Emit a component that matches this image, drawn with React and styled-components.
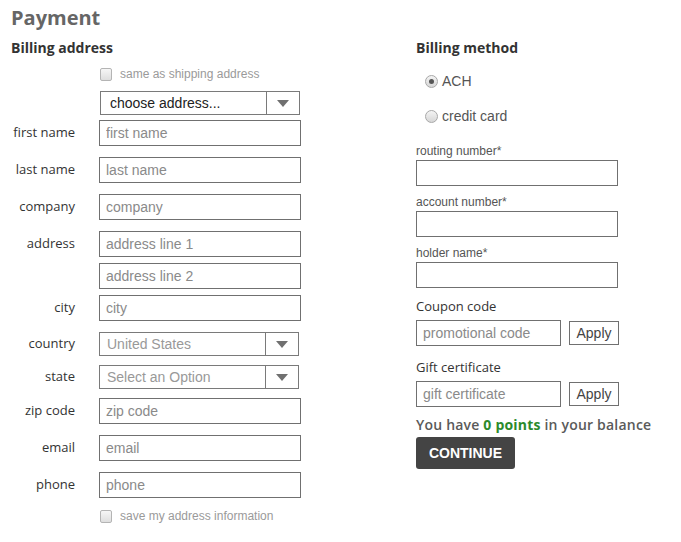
import styled, { createGlobalStyle } from "styled-components";

const GlobalStyle = createGlobalStyle`
  body {
    margin: 0;
    background: #fff;
    font-family: "Liberation Sans", Arial, sans-serif;
  }
  * { box-sizing: border-box; }
`;

function Checkbox({ label, top }) {
  return (
    <CheckRow $top={top}>
      <span />
      <CheckLabel>
        <CheckBox />
        {label}
      </CheckLabel>
    </CheckRow>
  );
}

function Field({ label, placeholder, top }) {
  return (
    <FieldRow $top={top}>
      <FieldLabel>{label}</FieldLabel>
      <TextInput placeholder={placeholder} />
    </FieldRow>
  );
}

function SelectField({ label, value, muted, top }) {
  return (
    <FieldRow $top={top}>
      <FieldLabel $select>{label}</FieldLabel>
      <Select>
        <SelectValue $muted={muted}>{value}</SelectValue>
        <SelectArrow />
      </Select>
    </FieldRow>
  );
}

function MethodField({ label, top }) {
  return (
    <MethodBlock $top={top}>
      <SmallLabel>{label}*</SmallLabel>
      <TextInput />
    </MethodBlock>
  );
}

function CodeField({ label, placeholder, top }) {
  return (
    <CodeBlock $top={top}>
      <CodeLabel>{label}</CodeLabel>
      <CodeRow>
        <CodeInput placeholder={placeholder} />
        <ApplyBtn>Apply</ApplyBtn>
      </CodeRow>
    </CodeBlock>
  );
}

function App() {
  return (
    <Page>
      <GlobalStyle />
      <Title>Payment</Title>
      <Columns>
        <LeftCol>
          <SectionTitle>Billing address</SectionTitle>
          <Checkbox label="same as shipping address" top={10} />
          <FieldRow $top={10}>
            <span />
            <Select $nudge>
              <SelectValue $dark>choose address...</SelectValue>
              <SelectArrow />
            </Select>
          </FieldRow>
          <Field label="first name" placeholder="first name" top={5} />
          <Field label="last name" placeholder="last name" top={11} />
          <Field label="company" placeholder="company" top={11} />
          <Field label="address" placeholder="address line 1" top={11} />
          <Field label="" placeholder="address line 2" top={6} />
          <Field label="city" placeholder="city" top={6} />
          <SelectField label="country" value="United States" muted top={11} />
          <SelectField label="state" value="Select an Option" muted top={9} />
          <Field label="zip code" placeholder="zip code" top={9} />
          <Field label="email" placeholder="email" top={11} />
          <Field label="phone" placeholder="phone" top={11} />
          <Checkbox label="save my address information" top={11} />
        </LeftCol>
        <RightCol>
          <SectionTitle>Billing method</SectionTitle>
          <RadioRow $top={16}>
            <Radio $checked />
            ACH
          </RadioRow>
          <RadioRow $top={19}>
            <Radio />
            credit card
          </RadioRow>
          <MethodField label="routing number" top={20} />
          <MethodField label="account number" top={9} />
          <MethodField label="holder name" top={9} />
          <CodeField label="Coupon code" placeholder="promotional code" top={10} />
          <CodeField label="Gift certificate" placeholder="gift certificate" top={13} />
          <Balance>
            You have <Points>0 points</Points> in your balance
          </Balance>
          <ContinueBtn>CONTINUE</ContinueBtn>
        </RightCol>
      </Columns>
    </Page>
  );
}

const Page = styled.div`
  padding: 6px 0 0 11px;
`;

const Title = styled.h1`
  margin: 0;
  font: 700 20px/24px "Open Sans", sans-serif;
  color: #666;
`;

const Columns = styled.div`
  display: flex;
  margin-top: 9px;
`;

const LeftCol = styled.div`
  width: 405px;
  display: flex;
  flex-direction: column;
`;

const RightCol = styled.div`
  width: 260px;
  display: flex;
  flex-direction: column;
`;

const SectionTitle = styled.h2`
  margin: 0;
  font: 700 14px/18px "Open Sans", sans-serif;
  color: #333;
`;

const FieldRow = styled.div`
  display: grid;
  grid-template-columns: 64px 202px;
  column-gap: 24px;
  margin-top: ${(p) => p.$top}px;
`;

const CheckRow = styled(FieldRow)`
  height: 14px;
`;

const CheckLabel = styled.label`
  display: flex;
  align-items: center;
  gap: 8px;
  padding-left: 1px;
  font-size: 12px;
  color: #9a9a9a;
`;

const CheckBox = styled.span`
  width: 12px;
  height: 13px;
  border: 1px solid #b4b4b4;
  border-radius: 2px;
  background: linear-gradient(#f6f6f6, #dedede);
`;

const FieldLabel = styled.label`
  text-align: right;
  padding-top: ${(p) => (p.$select ? 3 : 4)}px;
  font: 400 13px/16px "Open Sans", sans-serif;
  color: #333;
`;

const TextInput = styled.input`
  width: 202px;
  height: 26px;
  margin: 0;
  padding: 0 6px;
  border: 1px solid #707070;
  border-radius: 0;
  background: #fff;
  font: 14px "Liberation Sans", Arial, sans-serif;
  color: #333;
  &::placeholder {
    color: #8a8a8a;
  }
`;

const Select = styled.div`
  display: flex;
  width: 200px;
  height: 24px;
  margin-left: ${(p) => (p.$nudge ? 1 : 0)}px;
  border: 1px solid #7a7a7a;
  background: #fff;
`;

const SelectValue = styled.span`
  flex: 1;
  padding-left: ${(p) => (p.$dark ? 9 : 7)}px;
  font-size: 14px;
  line-height: 22px;
  color: ${(p) => (p.$muted ? "#999" : "#222")};
`;

const SelectArrow = styled.span`
  position: relative;
  width: 33px;
  border-left: 1px solid #7a7a7a;
  &::after {
    content: "";
    position: absolute;
    left: 10px;
    top: 8px;
    border-left: 6px solid transparent;
    border-right: 6px solid transparent;
    border-top: 7px solid #707070;
  }
`;

const RadioRow = styled.label`
  display: flex;
  align-items: center;
  gap: 4px;
  height: 16px;
  margin-top: ${(p) => p.$top}px;
  padding-left: 9px;
  font-size: 14px;
  line-height: 16px;
  color: #555;
`;

const Radio = styled.span`
  position: relative;
  width: 13px;
  height: 13px;
  border: 1px solid #a8a8a8;
  border-radius: 50%;
  background: linear-gradient(#f4f4f4, #d6d6d6);
  &::after {
    content: "";
    display: ${(p) => (p.$checked ? "block" : "none")};
    position: absolute;
    left: 3px;
    top: 3px;
    width: 5px;
    height: 5px;
    border-radius: 50%;
    background: #555;
  }
`;

const MethodBlock = styled.div`
  display: flex;
  flex-direction: column;
  gap: 2px;
  margin-top: ${(p) => p.$top}px;
`;

const SmallLabel = styled.label`
  font-size: 12px;
  line-height: 14px;
  color: #555;
`;

const CodeBlock = styled.div`
  display: flex;
  flex-direction: column;
  gap: 6px;
  margin-top: ${(p) => p.$top}px;
`;

const CodeLabel = styled.label`
  font: 400 13px/16px "Open Sans", sans-serif;
  color: #333;
`;

const CodeRow = styled.div`
  display: flex;
  align-items: center;
  gap: 8px;
`;

const CodeInput = styled(TextInput)`
  width: 145px;
`;

const ApplyBtn = styled.button`
  width: 50px;
  height: 24px;
  padding: 0;
  border: 1px solid #707070;
  border-radius: 0;
  background: #fff;
  font: 14px "Liberation Sans", Arial, sans-serif;
  color: #444;
  cursor: pointer;
`;

const Balance = styled.p`
  margin: 9px 0 0;
  font: 600 14px/18px "Open Sans", sans-serif;
  letter-spacing: 0.2px;
  color: #5a5a5a;
`;

const Points = styled.span`
  font-weight: 700;
  color: #2c8a2c;
`;

const ContinueBtn = styled.button`
  align-self: flex-start;
  width: 99px;
  height: 32px;
  margin-top: 3px;
  padding: 0;
  border: none;
  border-radius: 3px;
  background: #444;
  font: 700 14px "Liberation Sans", Arial, sans-serif;
  color: #fff;
  cursor: pointer;
`;

export default App;
